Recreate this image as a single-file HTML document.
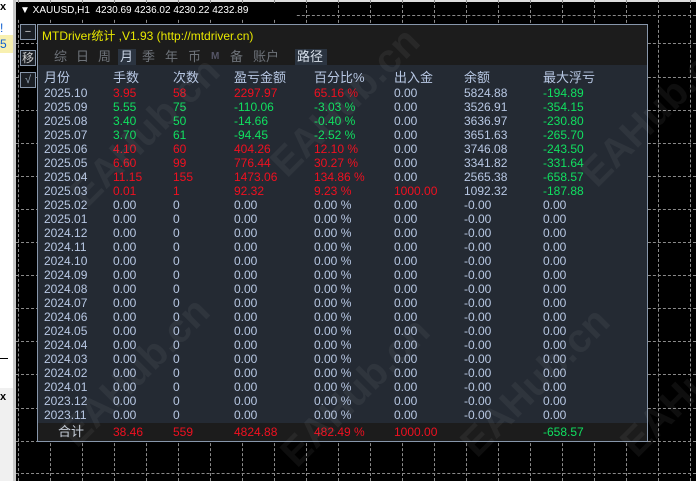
<!DOCTYPE html>
<html><head><meta charset="utf-8"><style>
body{margin:0;width:696px;height:481px;overflow:hidden;background:#000;position:relative;font-family:"Liberation Sans","Noto Sans CJK SC",sans-serif;}
.a{position:absolute;white-space:nowrap}
.vl{position:absolute;top:0;height:481px;width:0;border-left:1px dashed #8a8a8a}
.hl{position:absolute;left:16px;width:680px;height:0;border-top:1px dashed #8a8a8a}
#panel{position:absolute;left:37px;top:24px;width:609px;height:416px;border:1px solid #8796aa;background:#242a33;overflow:hidden}
.r{position:absolute;left:0;width:609px;height:14px;font-size:12px;line-height:14px;color:#b8c8e4}
.r span{position:absolute;top:0}
.c1{left:6px}.c2{left:75px}.c3{left:135px}.c4{left:196px}.c5{left:276px}.c6{left:356px}.c7{left:426px}.c8{left:505px}
.R{color:#f01020}.G{color:#10e060}
.tab{position:absolute;top:24px;font-size:13px;color:#6e737a;line-height:16px}
.wm{position:absolute;font-size:40px;font-weight:bold;color:rgba(200,200,200,0.07);transform:rotate(-45deg);white-space:nowrap}
.btn{position:absolute;left:20px;width:14px;height:14px;border:1px solid #8796aa;background:#1a1e24;color:#ccc;font-size:11px;line-height:14px;text-align:center}
</style></head><body>
<!-- left strip -->
<div class="a" style="left:0;top:0;width:13px;height:481px;background:#fff"></div>
<div class="a" style="left:0;top:0;width:13px;height:14px;font-size:11px;font-weight:bold;color:#000;line-height:14px">x</div>
<div class="a" style="left:0;top:21px;font-size:12px;color:#1060d0">!</div>
<div class="a" style="left:0;top:35px;width:13px;height:18px;background:#f8f0b0;font-size:12px;color:#1060d0;line-height:18px">5</div>
<div class="a" style="left:0;top:358px;width:8px;height:1px;background:#000"></div>
<div class="a" style="left:0;top:388px;width:13px;height:93px;background:#f0f0f0"></div>
<div class="a" style="left:0;top:391px;font-size:11px;font-weight:bold;color:#000">x</div>
<div class="a" style="left:13px;top:0;width:3px;height:481px;background:#c8c8c8"></div>
<div class="a" style="left:16px;top:0;width:680px;height:2px;background:#ddd"></div>
<!-- grid -->
<div class="vl" style="left:18px"></div><div class="vl" style="left:50px"></div><div class="vl" style="left:82px"></div><div class="vl" style="left:114px"></div><div class="vl" style="left:146px"></div><div class="vl" style="left:178px"></div><div class="vl" style="left:210px"></div><div class="vl" style="left:242px"></div><div class="vl" style="left:274px"></div><div class="vl" style="left:306px"></div><div class="vl" style="left:338px"></div><div class="vl" style="left:370px"></div><div class="vl" style="left:402px"></div><div class="vl" style="left:434px"></div><div class="vl" style="left:466px"></div><div class="vl" style="left:498px"></div><div class="vl" style="left:530px"></div><div class="vl" style="left:562px"></div><div class="vl" style="left:594px"></div><div class="vl" style="left:626px"></div><div class="vl" style="left:658px"></div><div class="vl" style="left:690px"></div>
<div class="hl" style="top:15px"></div><div class="hl" style="top:43px"></div><div class="hl" style="top:77px"></div><div class="hl" style="top:110px"></div><div class="hl" style="top:143px"></div><div class="hl" style="top:176px"></div><div class="hl" style="top:209px"></div><div class="hl" style="top:242px"></div><div class="hl" style="top:275px"></div><div class="hl" style="top:308px"></div><div class="hl" style="top:341px"></div><div class="hl" style="top:374px"></div><div class="hl" style="top:408px"></div><div class="hl" style="top:441px"></div><div class="hl" style="top:473px"></div>
<div class="a" style="left:16px;top:3px;width:280px;height:16px;background:#000"></div>
<div class="a" style="left:20px;top:5px;font-size:10px;color:#fff;line-height:12px">&#9660; XAUUSD,H1&nbsp; 4230.69 4236.02 4230.22 4232.89</div>
<div class="btn" style="top:24px">−</div>
<div class="btn" style="top:50px;font-size:12px">移</div>
<div class="btn" style="top:72px;color:#9ab">√</div>
<div id="panel">
 <div class="a" style="left:0;top:0;width:609px;height:40px;background:#1c1c1c"></div>
 <div class="a" style="left:4px;top:4px;font-size:12px;color:#e8e800;line-height:14px">MTDriver统计 ,V1.93 (http://mtdriver.cn)</div>
 <div class="a" style="left:80px;top:24px;width:18px;height:16px;background:#2b3440"></div>
 <div class="a" style="left:257px;top:24px;width:32px;height:16px;background:#2b3440"></div>
 <div class="tab" style="left:16px">综</div><div class="tab" style="left:38px">日</div><div class="tab" style="left:60px">周</div><div class="tab" style="left:82px;color:#c8d4e4">月</div><div class="tab" style="left:104px">季</div><div class="tab" style="left:127px">年</div><div class="tab" style="left:150px">币</div><div class="tab" style="left:173px;font-size:10px;font-weight:bold;color:#556">M</div><div class="tab" style="left:192px">备</div><div class="tab" style="left:215px">账户</div><div class="tab" style="left:259px;color:#d8e0ea">路径</div>
 <div class="r" style="top:46px;font-size:13px"><span class="c1">月份</span><span class="c2">手数</span><span class="c3">次数</span><span class="c4">盈亏金额</span><span class="c5">百分比%</span><span class="c6">出入金</span><span class="c7">余额</span><span class="c8">最大浮亏</span></div>
 <div class="r" style="top:61px"><span class="c1">2025.10</span><span class="c2 R">3.95</span><span class="c3 R">58</span><span class="c4 R">2297.97</span><span class="c5 R">65.16 %</span><span class="c6">0.00</span><span class="c7">5824.88</span><span class="c8 G">-194.89</span></div>
 <div class="r" style="top:75px"><span class="c1">2025.09</span><span class="c2 G">5.55</span><span class="c3 G">75</span><span class="c4 G">-110.06</span><span class="c5 G">-3.03 %</span><span class="c6">0.00</span><span class="c7">3526.91</span><span class="c8 G">-354.15</span></div>
 <div class="r" style="top:89px"><span class="c1">2025.08</span><span class="c2 G">3.40</span><span class="c3 G">50</span><span class="c4 G">-14.66</span><span class="c5 G">-0.40 %</span><span class="c6">0.00</span><span class="c7">3636.97</span><span class="c8 G">-230.80</span></div>
 <div class="r" style="top:103px"><span class="c1">2025.07</span><span class="c2 G">3.70</span><span class="c3 G">61</span><span class="c4 G">-94.45</span><span class="c5 G">-2.52 %</span><span class="c6">0.00</span><span class="c7">3651.63</span><span class="c8 G">-265.70</span></div>
 <div class="r" style="top:117px"><span class="c1">2025.06</span><span class="c2 R">4.10</span><span class="c3 R">60</span><span class="c4 R">404.26</span><span class="c5 R">12.10 %</span><span class="c6">0.00</span><span class="c7">3746.08</span><span class="c8 G">-243.50</span></div>
 <div class="r" style="top:131px"><span class="c1">2025.05</span><span class="c2 R">6.60</span><span class="c3 R">99</span><span class="c4 R">776.44</span><span class="c5 R">30.27 %</span><span class="c6">0.00</span><span class="c7">3341.82</span><span class="c8 G">-331.64</span></div>
 <div class="r" style="top:145px"><span class="c1">2025.04</span><span class="c2 R">11.15</span><span class="c3 R">155</span><span class="c4 R">1473.06</span><span class="c5 R">134.86 %</span><span class="c6">0.00</span><span class="c7">2565.38</span><span class="c8 G">-658.57</span></div>
 <div class="r" style="top:159px"><span class="c1">2025.03</span><span class="c2 R">0.01</span><span class="c3 R">1</span><span class="c4 R">92.32</span><span class="c5 R">9.23 %</span><span class="c6 R">1000.00</span><span class="c7">1092.32</span><span class="c8 G">-187.88</span></div>
 <div class="r" style="top:173px"><span class="c1">2025.02</span><span class="c2">0.00</span><span class="c3">0</span><span class="c4">0.00</span><span class="c5">0.00 %</span><span class="c6">0.00</span><span class="c7">-0.00</span><span class="c8">0.00</span></div>
 <div class="r" style="top:187px"><span class="c1">2025.01</span><span class="c2">0.00</span><span class="c3">0</span><span class="c4">0.00</span><span class="c5">0.00 %</span><span class="c6">0.00</span><span class="c7">-0.00</span><span class="c8">0.00</span></div>
 <div class="r" style="top:201px"><span class="c1">2024.12</span><span class="c2">0.00</span><span class="c3">0</span><span class="c4">0.00</span><span class="c5">0.00 %</span><span class="c6">0.00</span><span class="c7">-0.00</span><span class="c8">0.00</span></div>
 <div class="r" style="top:215px"><span class="c1">2024.11</span><span class="c2">0.00</span><span class="c3">0</span><span class="c4">0.00</span><span class="c5">0.00 %</span><span class="c6">0.00</span><span class="c7">-0.00</span><span class="c8">0.00</span></div>
 <div class="r" style="top:229px"><span class="c1">2024.10</span><span class="c2">0.00</span><span class="c3">0</span><span class="c4">0.00</span><span class="c5">0.00 %</span><span class="c6">0.00</span><span class="c7">-0.00</span><span class="c8">0.00</span></div>
 <div class="r" style="top:243px"><span class="c1">2024.09</span><span class="c2">0.00</span><span class="c3">0</span><span class="c4">0.00</span><span class="c5">0.00 %</span><span class="c6">0.00</span><span class="c7">-0.00</span><span class="c8">0.00</span></div>
 <div class="r" style="top:257px"><span class="c1">2024.08</span><span class="c2">0.00</span><span class="c3">0</span><span class="c4">0.00</span><span class="c5">0.00 %</span><span class="c6">0.00</span><span class="c7">-0.00</span><span class="c8">0.00</span></div>
 <div class="r" style="top:271px"><span class="c1">2024.07</span><span class="c2">0.00</span><span class="c3">0</span><span class="c4">0.00</span><span class="c5">0.00 %</span><span class="c6">0.00</span><span class="c7">-0.00</span><span class="c8">0.00</span></div>
 <div class="r" style="top:285px"><span class="c1">2024.06</span><span class="c2">0.00</span><span class="c3">0</span><span class="c4">0.00</span><span class="c5">0.00 %</span><span class="c6">0.00</span><span class="c7">-0.00</span><span class="c8">0.00</span></div>
 <div class="r" style="top:299px"><span class="c1">2024.05</span><span class="c2">0.00</span><span class="c3">0</span><span class="c4">0.00</span><span class="c5">0.00 %</span><span class="c6">0.00</span><span class="c7">-0.00</span><span class="c8">0.00</span></div>
 <div class="r" style="top:313px"><span class="c1">2024.04</span><span class="c2">0.00</span><span class="c3">0</span><span class="c4">0.00</span><span class="c5">0.00 %</span><span class="c6">0.00</span><span class="c7">-0.00</span><span class="c8">0.00</span></div>
 <div class="r" style="top:327px"><span class="c1">2024.03</span><span class="c2">0.00</span><span class="c3">0</span><span class="c4">0.00</span><span class="c5">0.00 %</span><span class="c6">0.00</span><span class="c7">-0.00</span><span class="c8">0.00</span></div>
 <div class="r" style="top:341px"><span class="c1">2024.02</span><span class="c2">0.00</span><span class="c3">0</span><span class="c4">0.00</span><span class="c5">0.00 %</span><span class="c6">0.00</span><span class="c7">-0.00</span><span class="c8">0.00</span></div>
 <div class="r" style="top:355px"><span class="c1">2024.01</span><span class="c2">0.00</span><span class="c3">0</span><span class="c4">0.00</span><span class="c5">0.00 %</span><span class="c6">0.00</span><span class="c7">-0.00</span><span class="c8">0.00</span></div>
 <div class="r" style="top:369px"><span class="c1">2023.12</span><span class="c2">0.00</span><span class="c3">0</span><span class="c4">0.00</span><span class="c5">0.00 %</span><span class="c6">0.00</span><span class="c7">-0.00</span><span class="c8">0.00</span></div>
 <div class="r" style="top:383px"><span class="c1">2023.11</span><span class="c2">0.00</span><span class="c3">0</span><span class="c4">0.00</span><span class="c5">0.00 %</span><span class="c6">0.00</span><span class="c7">-0.00</span><span class="c8">0.00</span></div>
 <div class="a" style="left:0;top:398px;width:609px;height:18px;background:#1c1c1c"></div>
 <div class="r" style="top:400px"><span style="left:20px;font-size:13px;color:#c8d0dc">合计</span><span class="c2 R">38.46</span><span class="c3 R">559</span><span class="c4 R">4824.88</span><span class="c5 R">482.49 %</span><span class="c6 R">1000.00</span><span class="c8 G">-658.57</span></div>
</div>
<div class="wm" style="left:50px;top:110px">EAHub.cn</div>
<div class="wm" style="left:250px;top:80px">EAHub.cn</div>
<div class="wm" style="left:560px;top:90px">EAHub.cn</div>
<div class="wm" style="left:40px;top:350px">EAHub.cn</div>
<div class="wm" style="left:260px;top:370px">EAHub.cn</div>
<div class="wm" style="left:440px;top:360px">EAHub.cn</div>
<div class="wm" style="left:600px;top:360px">EAHub.cn</div>
</body></html>
